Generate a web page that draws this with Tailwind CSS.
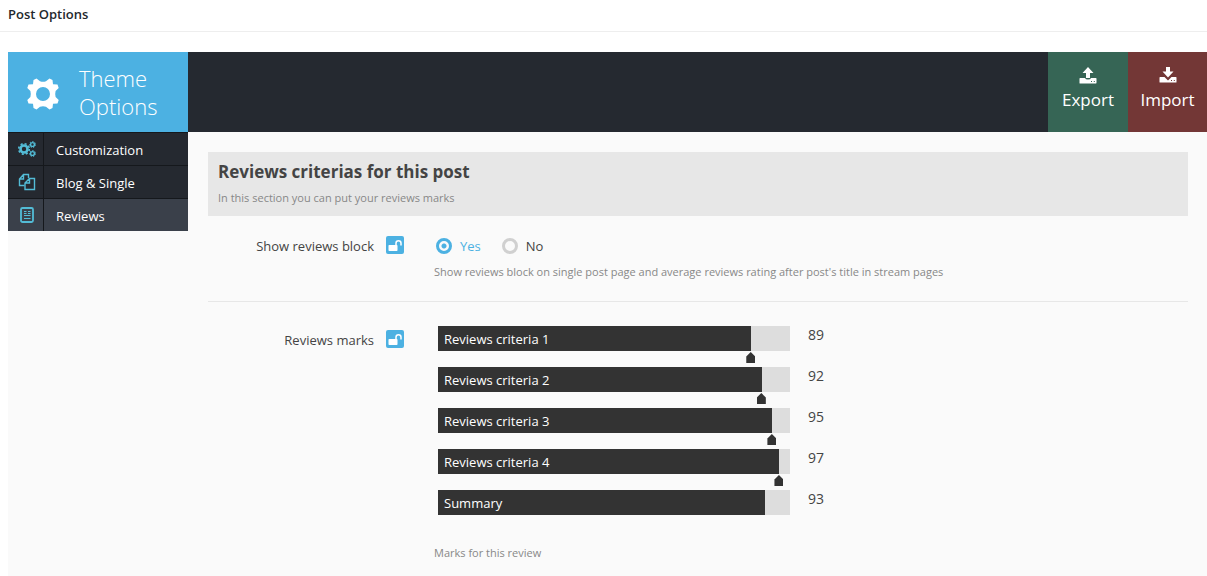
<!DOCTYPE html>
<html lang="en">
<head>
<meta charset="utf-8">
<meta name="viewport" content="width=device-width, initial-scale=1">
<title>Post Options</title>
<script src="https://cdn.jsdelivr.net/npm/@tailwindcss/browser@4"></script>
</head>
<body class="flex min-h-screen flex-col bg-white font-['Open_Sans','Noto_Sans',sans-serif] text-[13px] text-[#444]">
<svg class="hidden" aria-hidden="true">
  <symbol id="lock" viewBox="0 0 18 18">
    <rect x="2.500" y="9" width="9" height="6" rx=".8" fill="#fff"/>
    <path d="M10 9.500V7.200a2.500 2.500 0 0 1 5 0v2.300" fill="none" stroke="#fff" stroke-width="1.500"/>
  </symbol>
  <symbol id="gear" viewBox="-16 -16 32 32">
    <path fill="currentColor" fill-rule="evenodd" d="M-6.500 -15.500L-3 -12.800Q0 -11.800 3 -12.800L6.500 -15.500L9.500 -14L10 -9.800L14.500 -9.500L15.700 -6L12.600 -3Q11.800 0 12.600 3L15.700 6L14.500 9.500L10 9.800L9.500 14L6.500 15.500L3 12.800Q0 11.800 -3 12.800L-6.500 15.500L-9.500 14L-10 9.800L-14.500 9.500L-15.700 6L-12.600 3Q-11.800 0 -12.600 -3L-15.700 -6L-14.500 -9.500L-10 -9.800L-9.500 -14ZM0 -7A7 7 0 1 0 0 7A7 7 0 1 0 0 -7Z"/>
  </symbol>
</svg>

<header class="h-8 shrink-0 border-b border-[#eee] px-2">
  <h1 class="text-[13px] leading-7 font-semibold text-[#23282d]">Post Options</h1>
</header>

<div class="mt-5 ml-2 flex grow flex-col bg-[#fafafa]">
  <div class="flex h-20 bg-[#252930] text-white">
    <div class="flex w-45 items-center bg-[#4cb1e2] pl-[19px]">
      <svg class="mt-1 size-8 shrink-0"><use href="#gear"/></svg>
      <h2 class="ml-5 text-[22px] leading-7 font-light">Theme Options</h2>
    </div>
    <div class="ml-auto flex text-[17px] leading-6">
      <button type="button" class="flex w-20 flex-col items-center bg-[#366555] pt-[15px]">
        <svg class="h-[17px] w-[18px]" viewBox="0 0 18 17" fill="#fff"><path d="M9 0L14.500 6H11V11H7V6H3.500Z"/><path fill-rule="evenodd" d="M1 11H6Q6.500 12.500 9 12.500Q11.500 12.500 12 11H17Q17.500 11 17.500 12V15.500Q17.500 16.500 17 16.500H1Q.5 16.500 .5 16V12Q.5 11 1 11ZM12 14V15H13V14ZM14.800 14V15H15.800V14Z"/></svg>
        <span class="mt-1">Export</span>
      </button>
      <button type="button" class="flex w-[79px] flex-col items-center bg-[#733736] pt-[15px]">
        <svg class="h-[17px] w-[18px]" viewBox="0 0 18 17" fill="#fff"><path d="M7 0H11V4.500H14.500L9 10.500L3.500 4.500H7Z"/><path fill-rule="evenodd" d="M1 10H5.500L9 13.500L12.500 10H17Q17.500 10 17.500 11V15Q17.500 15.500 17 15.500H1Q.5 15.500 .5 15V11Q.5 10 1 10ZM12 13V14H13V13ZM14.800 13V14H15.800V13Z"/></svg>
        <span class="mt-1">Import</span>
      </button>
    </div>
  </div>

  <div class="flex grow">
    <nav class="w-45 shrink-0 text-white" aria-label="Theme options">
      <a href="#customization" class="flex h-[33px] border-t border-[#15181c] bg-[#252930]">
        <span class="flex w-9 items-center justify-center border-r border-[#15181c] pl-[3px] text-[#53bcd6]">
          <svg class="size-[18px]" viewBox="0 0 18 18" fill="none" stroke="currentColor"><circle cx="6" cy="9" r="3.500" stroke-width="2.600"/><circle cx="6" cy="9" r="5.300" stroke-width="1.600" stroke-dasharray="2.100 2.060"/><circle cx="14.500" cy="4.500" r="1.900" stroke-width="1.400"/><circle cx="14.500" cy="4.500" r="3" stroke-width="1" stroke-dasharray="1.400 1.290"/><circle cx="14.500" cy="13.500" r="1.900" stroke-width="1.400"/><circle cx="14.500" cy="13.500" r="3" stroke-width="1" stroke-dasharray="1.400 1.290"/></svg>
        </span>
        <span class="pl-3 leading-[34px]">Customization</span>
      </a>
      <a href="#blog" class="flex h-[33px] border-t border-[#15181c] bg-[#252930]">
        <span class="flex w-9 items-center justify-center border-r border-[#15181c] pl-[3px] text-[#53bcd6]">
          <svg class="size-[18px]" viewBox="0 0 18 18" fill="none" stroke="currentColor" stroke-width="1.400"><path d="M6.500 12.500H1.500V6L5.500 1.500H10.500V5M5.500 1.500V6H1.500"/><path d="M7 16.500V10L11.500 5.500H16.500V16.500ZM11.500 5.500V10H7"/></svg>
        </span>
        <span class="pl-3 leading-[34px]">Blog &amp; Single</span>
      </a>
      <a href="#reviews" aria-current="page" class="flex h-[33px] border-t border-[#15181c] bg-[#3a404a]">
        <span class="flex w-9 items-center justify-center border-r border-[#15181c] pl-[3px] text-[#53bcd6]">
          <svg class="size-[18px]" viewBox="0 0 18 18" fill="none" stroke="currentColor"><rect x="3" y="2" width="12" height="14" rx="1.500" stroke-width="1.800"/><path d="M6 5.500H8.500M10 5.500H12.500M6 7.500H8.500M10 7.500H12.500M6 9.500H12.500M6 12.500H12.500"/></svg>
        </span>
        <span class="pl-3 leading-[34px]">Reviews</span>
      </a>
    </nav>

    <main class="mt-5 mr-[19px] ml-5 grow">
      <div class="h-16 bg-[#e7e7e7] px-[10px] pt-2">
        <h2 class="text-[17px] leading-6 font-bold">Reviews criterias for this post</h2>
        <p class="mt-1 text-[11px] leading-5 text-[#888]">In this section you can put your reviews marks</p>
      </div>

      <section class="flex h-[86px] gap-[30px] border-b border-[#e7e7e7] pt-5">
        <div class="flex w-49 shrink-0 justify-end gap-3">
          <span id="show-label" class="leading-5">Show reviews block</span>
          <button type="button" aria-label="Unlock show reviews block" class="size-[18px] rounded-xs bg-[#4cb1e2]"><svg class="size-[18px]"><use href="#lock"/></svg></button>
        </div>
        <div>
          <div role="radiogroup" aria-labelledby="show-label" class="flex gap-[21px] pl-0.5 leading-5">
            <label class="flex items-center gap-2 text-[#4cb1e2]"><input type="radio" name="show" checked class="size-4 appearance-none rounded-full border-[3px] border-[#d0d0d0] checked:border-[#4cb1e2] checked:bg-[radial-gradient(circle,#4cb1e2_2px,#fafafa_3px)]">Yes</label>
            <label class="flex items-center gap-2"><input type="radio" name="show" class="size-4 appearance-none rounded-full border-[3px] border-[#d0d0d0] checked:border-[#4cb1e2] checked:bg-[radial-gradient(circle,#4cb1e2_2px,#fafafa_3px)]">No</label>
          </div>
          <p class="mt-[6px] text-[11px] leading-5 text-[#888]">Show reviews block on single post page and average reviews rating after post's title in stream pages</p>
        </div>
      </section>

      <section class="flex gap-[30px] pt-6">
        <div class="flex w-49 shrink-0 justify-end gap-3 pt-1">
          <span class="leading-5">Reviews marks</span>
          <button type="button" aria-label="Unlock reviews marks" class="size-[18px] rounded-xs bg-[#4cb1e2]"><svg class="size-[18px]"><use href="#lock"/></svg></button>
        </div>
        <div>
          <div class="flex flex-col gap-4 pl-1">
            <div class="flex gap-[18px]">
              <div class="relative h-[25px] w-88 bg-[#ddd]">
                <div class="h-full bg-[#333]" style="width:89%"></div>
                <label for="c1" class="absolute inset-y-0 left-[6px] leading-[26px] text-white">Reviews criteria 1</label>
                <input id="c1" type="range" value="89" class="absolute top-[26px] -left-[5px] h-[11px] w-[361px] appearance-none bg-transparent [&::-webkit-slider-thumb]:h-[11px] [&::-webkit-slider-thumb]:w-[9px] [&::-webkit-slider-thumb]:appearance-none [&::-webkit-slider-thumb]:bg-[#333] [&::-webkit-slider-thumb]:[clip-path:polygon(50%_0,100%_40%,100%_100%,0_100%,0_40%)]">
              </div>
              <output for="c1" class="text-sm leading-[18px]">89</output>
            </div>
            <div class="flex gap-[18px]">
              <div class="relative h-[25px] w-88 bg-[#ddd]">
                <div class="h-full bg-[#333]" style="width:92%"></div>
                <label for="c2" class="absolute inset-y-0 left-[6px] leading-[26px] text-white">Reviews criteria 2</label>
                <input id="c2" type="range" value="92" class="absolute top-[26px] -left-[5px] h-[11px] w-[361px] appearance-none bg-transparent [&::-webkit-slider-thumb]:h-[11px] [&::-webkit-slider-thumb]:w-[9px] [&::-webkit-slider-thumb]:appearance-none [&::-webkit-slider-thumb]:bg-[#333] [&::-webkit-slider-thumb]:[clip-path:polygon(50%_0,100%_40%,100%_100%,0_100%,0_40%)]">
              </div>
              <output for="c2" class="text-sm leading-[18px]">92</output>
            </div>
            <div class="flex gap-[18px]">
              <div class="relative h-[25px] w-88 bg-[#ddd]">
                <div class="h-full bg-[#333]" style="width:95%"></div>
                <label for="c3" class="absolute inset-y-0 left-[6px] leading-[26px] text-white">Reviews criteria 3</label>
                <input id="c3" type="range" value="95" class="absolute top-[26px] -left-[5px] h-[11px] w-[361px] appearance-none bg-transparent [&::-webkit-slider-thumb]:h-[11px] [&::-webkit-slider-thumb]:w-[9px] [&::-webkit-slider-thumb]:appearance-none [&::-webkit-slider-thumb]:bg-[#333] [&::-webkit-slider-thumb]:[clip-path:polygon(50%_0,100%_40%,100%_100%,0_100%,0_40%)]">
              </div>
              <output for="c3" class="text-sm leading-[18px]">95</output>
            </div>
            <div class="flex gap-[18px]">
              <div class="relative h-[25px] w-88 bg-[#ddd]">
                <div class="h-full bg-[#333]" style="width:97%"></div>
                <label for="c4" class="absolute inset-y-0 left-[6px] leading-[26px] text-white">Reviews criteria 4</label>
                <input id="c4" type="range" value="97" class="absolute top-[26px] -left-[5px] h-[11px] w-[361px] appearance-none bg-transparent [&::-webkit-slider-thumb]:h-[11px] [&::-webkit-slider-thumb]:w-[9px] [&::-webkit-slider-thumb]:appearance-none [&::-webkit-slider-thumb]:bg-[#333] [&::-webkit-slider-thumb]:[clip-path:polygon(50%_0,100%_40%,100%_100%,0_100%,0_40%)]">
              </div>
              <output for="c4" class="text-sm leading-[18px]">97</output>
            </div>
            <div class="flex gap-[18px]">
              <div class="relative h-[25px] w-88 bg-[#ddd]">
                <div class="h-full bg-[#333]" style="width:93%"></div>
                <span class="absolute inset-y-0 left-[6px] leading-[26px] text-white">Summary</span>
              </div>
              <output class="text-sm leading-[18px]">93</output>
            </div>
          </div>
          <p class="mt-7 text-[11px] leading-5 text-[#888]">Marks for this review</p>
        </div>
      </section>
    </main>
  </div>
</div>
</body>
</html>
